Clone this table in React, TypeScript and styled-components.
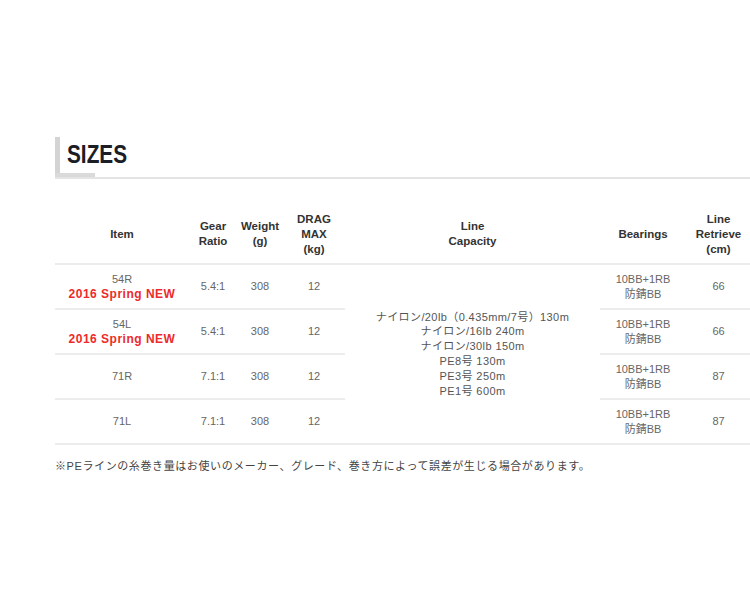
import React from 'react';
import styled, { createGlobalStyle } from 'styled-components';

const GlobalStyle = createGlobalStyle`
  html, body {
    margin: 0;
    padding: 0;
    background: #ffffff;
    overflow-x: hidden;
  }
  body {
    font-family: "Liberation Sans", "Noto Sans CJK JP", sans-serif;
    color: #555;
  }
`;

const Page = styled.div`
  width: 750px;
  height: 600px;
  padding: 137px 0 0 55px;
  box-sizing: border-box;
  overflow: hidden;
`;

const HeadingWrap = styled.div`
  position: relative;
  border-bottom: 2px solid #e4e4e4;
  height: 40px;
`;

const HeadingBar = styled.span`
  position: absolute;
  left: 0;
  top: 0;
  width: 5px;
  height: 40px;
  background: #d4d4d4;

  &::after {
    content: '';
    position: absolute;
    left: 0;
    bottom: 0;
    width: 40px;
    height: 4px;
    background: #dadada;
  }
`;

const Title = styled.h2`
  margin: 0;
  padding: 3px 0 0 15px;
  font-family: "Liberation Sans", sans-serif;
  font-weight: bold;
  font-size: 26px;
  line-height: 28px;
  color: #1b1e24;
  transform: scaleX(0.8);
  transform-origin: left center;
`;

const Table = styled.table`
  margin-top: 26px;
  border-collapse: collapse;
  table-layout: fixed;
  width: 696px;
`;

const Th = styled.th`
  height: 58px;
  padding: 0;
  font-size: 11.5px;
  line-height: 15px;
  font-weight: bold;
  color: #333;
  text-align: center;
  vertical-align: middle;
  border-bottom: 2px solid #ececec;
`;

const Td = styled.td`
  height: 43px;
  padding: 0;
  font-size: 11px;
  line-height: 15px;
  color: #666;
  text-align: center;
  vertical-align: middle;
  border-bottom: 2px solid #ececec;
`;

const Capacity = styled(Td)`
  line-height: 14.8px;
  letter-spacing: 0.4px;
  color: #555;
`;

const NewTag = styled.span`
  display: block;
  color: #ee2a2a;
  font-weight: bold;
  font-size: 12px;
  letter-spacing: 0.5px;
`;

const Note = styled.p`
  margin: 12px 0 0;
  font-size: 11px;
  letter-spacing: 0.6px;
  color: #444;
`;

const rows = [
  { item: '54R', isNew: true, ratio: '5.4:1', retrieve: '66' },
  { item: '54L', isNew: true, ratio: '5.4:1', retrieve: '66' },
  { item: '71R', isNew: false, ratio: '7.1:1', retrieve: '87' },
  { item: '71L', isNew: false, ratio: '7.1:1', retrieve: '87' },
];

const capacity = [
  'ナイロン/20lb（0.435mm/7号）130m',
  'ナイロン/16lb 240m',
  'ナイロン/30lb 150m',
  'PE8号 130m',
  'PE3号 250m',
  'PE1号 600m',
];

const App: React.FC = () => {
  return (
    <Page>
      <GlobalStyle />
      <HeadingWrap>
        <HeadingBar />
        <Title>SIZES</Title>
      </HeadingWrap>
      <Table>
        <colgroup>
          <col style={{ width: 134 }} />
          <col style={{ width: 48 }} />
          <col style={{ width: 46 }} />
          <col style={{ width: 62 }} />
          <col style={{ width: 255 }} />
          <col style={{ width: 86 }} />
          <col style={{ width: 65 }} />
        </colgroup>
        <thead>
          <tr>
            <Th>Item</Th>
            <Th>Gear<br />Ratio</Th>
            <Th>Weight<br />(g)</Th>
            <Th>DRAG<br />MAX<br />(kg)</Th>
            <Th>Line<br />Capacity</Th>
            <Th>Bearings</Th>
            <Th>Line<br />Retrieve<br />(cm)</Th>
          </tr>
        </thead>
        <tbody>
          {rows.map((r, i) => (
            <tr key={r.item}>
              <Td>
                {r.item}
                {r.isNew && <NewTag>2016 Spring NEW</NewTag>}
              </Td>
              <Td>{r.ratio}</Td>
              <Td>308</Td>
              <Td>12</Td>
              {i === 0 && (
                <Capacity rowSpan={4}>
                  {capacity.map((c) => (
                    <div key={c}>{c}</div>
                  ))}
                </Capacity>
              )}
              <Td>
                10BB+1RB
                <br />
                防錆BB
              </Td>
              <Td>{r.retrieve}</Td>
            </tr>
          ))}
        </tbody>
      </Table>
      <Note>※PEラインの糸巻き量はお使いのメーカー、グレード、巻き方によって誤差が生じる場合があります。</Note>
    </Page>
  );
};

export default App;
